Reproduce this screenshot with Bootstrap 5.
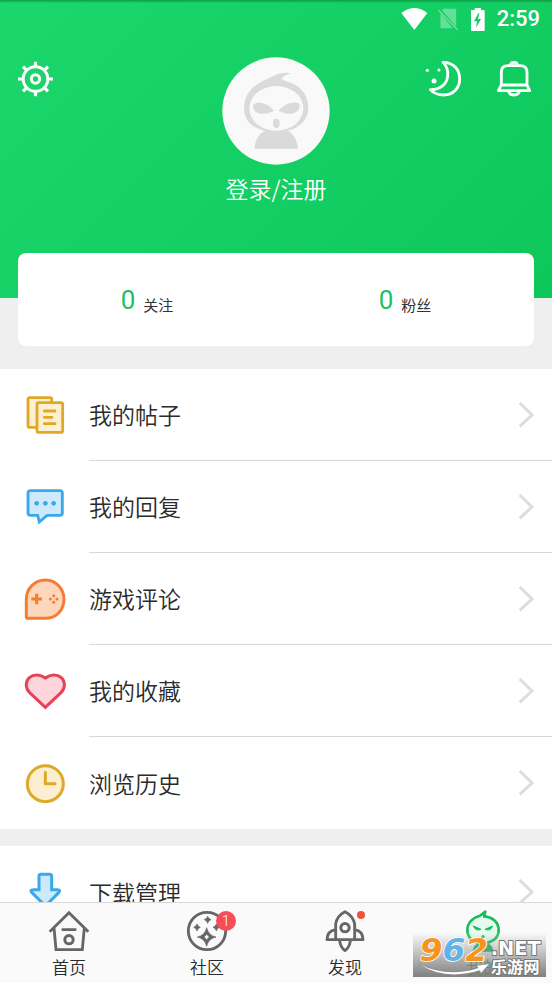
<!DOCTYPE html>
<html lang="zh-CN">
<head>
<meta charset="utf-8">
<meta name="viewport" content="width=device-width, initial-scale=1">
<title>个人中心</title>
<link href="https://cdn.jsdelivr.net/npm/bootstrap@5.3.0/dist/css/bootstrap.min.css" rel="stylesheet">
<style>
body{font-family:Roboto,"Noto Sans CJK SC",sans-serif;color:#2b2b2b;background:#efefef}
svg{display:block;overflow:visible;flex:none}
.scroll-area{scrollbar-width:none;min-height:0}
.scroll-area::-webkit-scrollbar{display:none}
.hero{background:linear-gradient(135deg,#1bd76c,#0dc75b);padding-bottom:93px}
.status-bar{height:38px;font-size:22px;line-height:38px;font-weight:500;padding-right:12px;background:linear-gradient(#0a9c46 0,#0a9c4600 3px)}
.hero-row{padding:19px 18px 0}
.hero-side{padding-top:4px}
.hero-tools{gap:35px;margin-right:3px}
.icon-btn{background:none;border:0;padding:0;color:#fff}
.login-link{font-family:"Noto Sans CJK SC",sans-serif;font-weight:350;font-size:23px;line-height:34px;margin-top:6px}
.stats{margin:-45px 18px 23px;height:93px;border-radius:8px}
.stat-link{color:#333;text-decoration:none}
.stat-num{font-size:26px;line-height:28px;color:#1fbf61}
.stat-name{font-size:15px;line-height:16px}
.menu-row{height:92px;color:#2b2b2b;text-decoration:none;font-family:"Noto Sans CJK SC",sans-serif;font-weight:350;font-size:23px}
.menu-icon{width:89px;padding-left:25px}
.menu-body{border-bottom:1px solid #d9d9d9;padding-right:18px}
.menu-row:last-child .menu-body{border-bottom:0}
.menu-gap{margin-bottom:17px}
.tabs{background:#fafafa;border-top:1px solid #d9d9d9;padding:8px 0 4px}
.tab-link{color:#2b2b2b;text-decoration:none;font-family:"Noto Sans CJK SC",sans-serif;font-weight:350;font-size:17px;line-height:24px}
.tab-link.current{color:#18bf5c}
.tab-count{left:29px;top:0;width:20px;height:20px;font-family:Roboto,sans-serif;font-size:14px;line-height:20px;background:#f64d57}
.tab-dot{left:32px;top:0;width:8px;height:8px;background:#f0523f}
.site-stamp{right:6px;bottom:6px;background:linear-gradient(#eeeeee22,#777e)}
</style>
</head>
<body>
<div class="vh-100 d-flex flex-column position-relative">
<main class="scroll-area flex-grow-1 overflow-auto">
  <header class="hero text-white">
    <div class="status-bar d-flex align-items-center justify-content-end">
      <svg width="27" height="22" viewBox="34 22 81 66" fill="#fff"><path d="M35 37Q74 7 113 37L74 88Z"/></svg>
      <svg class="ms-2" width="23" height="22" viewBox="138 22 68 66"><path d="M151 38V83H188L148 35ZM155 28 162 24H194Q198 24 198 28V78Z" fill="#fff" opacity=".35"/><path d="M145 29 202 87" stroke="#fff" stroke-width="4" opacity=".4"/></svg>
      <svg class="ms-2" width="22" height="23" viewBox="235 21 66 69"><path fill="#fff" fill-rule="evenodd" d="M258 21H277V27H285Q288 27 288 30V87Q288 90 285 90H250Q247 90 247 87V30Q247 27 250 27H258ZM269 37 256 61H265L262 80 277 54H268L272 37Z"/></svg>
      <span class="ms-2">2:59</span>
    </div>
    <div class="hero-row d-flex align-items-start">
      <div class="hero-side col">
        <button class="icon-btn" type="button" aria-label="设置">
          <svg width="35" height="36" viewBox="54 62 105 108" fill="none" stroke="#fff" stroke-width="9"><circle cx="106.500" cy="116" r="37"/><circle cx="106.500" cy="116" r="12.500"/><path stroke-width="9.500" d="M106.500 64V80M106.500 152V168M54 116H70M143 116H159M69 79 81 91M132 141 144 153M144 79 132 91M81 141 69 153"/></svg>
        </button>
      </div>
      <a href="#" class="text-white text-decoration-none d-flex flex-column align-items-center">
        <svg width="108" height="108" viewBox="36 19 324 324"><circle cx="198" cy="181" r="161" fill="#f9f9f9"/><path fill="#dadada" d="M133 294Q139 241 183 235H215Q258 241 264 294Z"/><path fill="#dadada" d="M102 174C102 125 135 99 174 84C196 73 218 62 243 68C228 73 219 78 214 85L228 92C269 101 295 132 295 171C295 214 257 244 198 244C139 244 102 216 102 174Z"/><ellipse cx="199" cy="173" rx="81" ry="67" fill="#f9f9f9"/><path fill="#dadada" d="M192 180C174 157 145 150 131 161C124 174 138 188 154 189C170 190 180 187 192 180ZM206 180C225 157 253 150 267 159C274 174 260 188 244 189C229 190 218 187 206 180Z"/><ellipse cx="199" cy="218" rx="10" ry="14" fill="#dadada"/></svg>
        <span class="login-link">登录/注册</span>
      </a>
      <div class="hero-side col">
        <div class="hero-tools d-flex justify-content-end me-n1">
        <button class="icon-btn" type="button" aria-label="夜间模式">
          <svg width="38" height="36" viewBox="102 183 114 108" fill="none" stroke="#fff" stroke-width="8.500" stroke-linejoin="round"><path d="M159 187C194 187 209 212 209 237C209 265 189 285 161 285C144 285 130 279 121 269C151 269 171 252 173 228C175 211 169 197 159 187Z"/><g fill="#fff" stroke="none"><circle cx="112" cy="211" r="5"/><circle cx="147" cy="210" r="4.500"/><circle cx="132" cy="243" r="7.500"/></g></svg>
        </button>
        <button class="icon-btn" type="button" aria-label="通知">
          <svg width="34" height="36" viewBox="320 183 102 108" fill="none" stroke="#fff" stroke-width="8.500" stroke-linejoin="round"><path d="M361 195Q361 187 371 187Q381 187 381 195M333 255V217Q333 197 353 197H389Q410 197 410 217V255L418 272H324L333 255H410M355 274Q357 285 371 285Q385 285 387 274"/></svg>
        </button>
        </div>
      </div>
    </div>
  </header>
  <section class="stats bg-white d-flex position-relative">
    <a href="#" class="stat-link col d-flex align-items-center justify-content-center"><span class="d-flex align-items-end gap-2"><span class="stat-num">0</span><span class="stat-name">关注</span></span></a>
    <a href="#" class="stat-link col d-flex align-items-center justify-content-center"><span class="d-flex align-items-end gap-2"><span class="stat-num">0</span><span class="stat-name">粉丝</span></span></a>
  </section>
  <nav class="menu-gap bg-white">
    <a href="#" class="menu-row d-flex align-items-center">
      <span class="menu-icon"><svg width="40" height="40" viewBox="75 43 120 120" fill="#fcf0d2" stroke="#dfa928" stroke-width="8.500" stroke-linecap="round"><rect x="84" y="51" width="71" height="89" rx="5"/><rect x="111" y="66" width="77" height="89" rx="5"/><path stroke-width="8.500" d="M133 91H165M133 110H156M133 129H165"/></svg></span>
      <span class="menu-body flex-grow-1 h-100 d-flex align-items-center justify-content-between">我的帖子<svg width="15" height="26" viewBox="117 65 45 78" fill="none" stroke="#ddd" stroke-width="9"><path d="M119 68 156 104 119 138"/></svg></span>
    </a>
    <a href="#" class="menu-row d-flex align-items-center">
      <span class="menu-icon"><svg width="40" height="40" viewBox="75 320 120 120"><path d="M92 331H179Q187 331 187 339V398Q187 405 179 405H141L118 425 113 405H92Q84 405 84 397V339Q84 331 92 331Z" fill="#cceafb" stroke="#39a9e8" stroke-width="8.500"/><g fill="#39a9e8"><circle cx="110" cy="369" r="7"/><circle cx="136" cy="369" r="7"/><circle cx="161" cy="369" r="7"/></g></svg></span>
      <span class="menu-body flex-grow-1 h-100 d-flex align-items-center justify-content-between">我的回复<svg width="15" height="26" viewBox="117 65 45 78" fill="none" stroke="#ddd" stroke-width="9"><path d="M119 68 156 104 119 138"/></svg></span>
    </a>
    <a href="#" class="menu-row d-flex align-items-center">
      <span class="menu-icon"><svg width="40" height="40" viewBox="75 55 120 120"><path d="M136 58C168 58 192 84 192 116C192 149 168 173 136 173H83Q79 173 79 169V116C79 84 104 58 136 58Z" fill="#fdd7bb" stroke="#f47d31" stroke-width="9"/><path d="M94 115H126M110 99V131" stroke="#f47d31" stroke-width="9"/><g fill="#f47d31"><circle cx="161" cy="105" r="4.500"/><circle cx="151" cy="115" r="4.500"/><circle cx="171" cy="115" r="4.500"/><circle cx="161" cy="125" r="4.500"/></g></svg></span>
      <span class="menu-body flex-grow-1 h-100 d-flex align-items-center justify-content-between">游戏评论<svg width="15" height="26" viewBox="117 65 45 78" fill="none" stroke="#ddd" stroke-width="9"><path d="M119 68 156 104 119 138"/></svg></span>
    </a>
    <a href="#" class="menu-row d-flex align-items-center">
      <span class="menu-icon"><svg width="40" height="40" viewBox="75 331 120 120"><path d="M136 440 89 396C75 382 76 362 88 351C101 340 121 340 136 352C151 340 171 340 184 351C196 362 197 382 183 396Z" fill="#ffd5dc" stroke="#e6435a" stroke-width="9"/></svg></span>
      <span class="menu-body flex-grow-1 h-100 d-flex align-items-center justify-content-between">我的收藏<svg width="15" height="26" viewBox="117 65 45 78" fill="none" stroke="#ddd" stroke-width="9"><path d="M119 68 156 104 119 138"/></svg></span>
    </a>
    <a href="#" class="menu-row d-flex align-items-center">
      <span class="menu-icon"><svg width="40" height="40" viewBox="75 52 120 120" stroke="#dfa928" stroke-width="9"><circle cx="136" cy="114" r="54" fill="#fcefd0"/><path d="M136 80V114H165" fill="none" stroke-linecap="round" stroke-linejoin="round"/></svg></span>
      <span class="menu-body flex-grow-1 h-100 d-flex align-items-center justify-content-between">浏览历史<svg width="15" height="26" viewBox="117 65 45 78" fill="none" stroke="#ddd" stroke-width="9"><path d="M119 68 156 104 119 138"/></svg></span>
    </a>
  </nav>
  <nav class="bg-white">
    <a href="#" class="menu-row d-flex align-items-center">
      <span class="menu-icon"><svg width="40" height="40" viewBox="75 381 120 120"><path d="M122 388H149Q155 388 155 394V434H172Q183 434 176 443L141 478Q136 482 131 478L96 443Q88 434 100 434H117V394Q117 388 122 388Z" fill="#cceafb" stroke="#39a9e8" stroke-width="9"/></svg></span>
      <span class="menu-body flex-grow-1 h-100 d-flex align-items-center justify-content-between">下载管理<svg width="15" height="26" viewBox="117 65 45 78" fill="none" stroke="#ddd" stroke-width="9"><path d="M119 68 156 104 119 138"/></svg></span>
    </a>
  </nav>
</main>
<nav class="tabs d-flex">
  <a href="#" class="tab-link col d-flex flex-column align-items-center gap-1"><svg width="40" height="40" viewBox="147 48 120 120" fill="none" stroke="#666" stroke-width="8.500"><path d="M149 110 207 53 265 110M162 98 168 164H247L253 98M185 104H229"/><circle cx="207" cy="134" r="12.500" stroke-width="9"/></svg>首页</a>
  <a href="#" class="tab-link col d-flex flex-column align-items-center gap-1"><span class="position-relative"><svg width="40" height="40" viewBox="561 48 120 120"><circle cx="621" cy="108" r="56" fill="none" stroke="#666" stroke-width="8.500"/><path fill="#666" fill-rule="evenodd" d="M620 98Q625 121 648 126Q625 131 620 154Q615 131 592 126Q615 121 620 98ZM620 118 612 126 620 134 628 126Z" stroke="#666" stroke-width="2"/><path fill="#666" stroke="#666" stroke-width="2" d="M623 64Q625 72 633 74Q625 76 623 85Q621 76 613 74Q621 72 623 64ZM591 87Q593 95 601 97Q593 99 591 108Q589 99 581 97Q589 95 591 87ZM649 87Q651 95 659 97Q651 99 649 108Q647 99 639 97Q647 95 649 87Z"/></svg><span class="tab-count position-absolute rounded-circle text-white text-center">1</span></span>社区</a>
  <a href="#" class="tab-link col d-flex flex-column align-items-center gap-1"><span class="position-relative"><svg width="40" height="40" viewBox="165 48 120 120" fill="none" stroke="#666" stroke-width="8.500" stroke-linejoin="round"><path d="M197 134V87Q201 62 225 50Q249 62 254 87V134ZM197 104Q171 108 171 134H197M254 104Q279 108 279 134H254M209 137Q211 157 225 167Q239 157 241 137"/><circle cx="225" cy="98" r="12.500" stroke-width="9"/></svg><span class="tab-dot position-absolute rounded-circle"></span></span>发现</a>
  <a href="#" class="tab-link current col d-flex flex-column align-items-center gap-1" aria-current="page"><svg width="40" height="40" viewBox="189 48 120 120"><path d="M217 170Q221 148 238 144H260Q277 148 281 170Z" fill="#18bf5c"/><path d="M249 64C279 64 296 84 296 105C296 130 276 144 249 144C221 144 202 130 202 105C202 84 219 67 239 63L256 50 252 63" fill="#e6faed" stroke="#18bf5c" stroke-width="8" stroke-linejoin="round"/><path d="M220 93 243 103Q227 110 220 93ZM278 93 255 103Q271 110 278 93Z" fill="#18bf5c" stroke="#18bf5c" stroke-width="3"/><circle cx="249" cy="125" r="5" fill="#18bf5c"/></svg>我的</a>
</nav>
<div class="site-stamp position-absolute">
  <svg width="133" height="44" viewBox="39 114 399 132" font-family="'DejaVu Sans',sans-serif" font-weight="700" paint-order="stroke" stroke="#fff" stroke-width="5" stroke-linejoin="round">
    <g font-style="italic" font-size="98"><text x="59" y="197" fill="#f7941e">9<tspan fill="#62b3e8">6</tspan><tspan>2</tspan></text></g>
    <path d="M58 207Q140 250 236 219L230 212 266 208 243 234 240 226Q135 258 58 207Z" fill="#fff" stroke="#888" stroke-width="2"/>
    <g fill="#fff" stroke="#777" stroke-width="6"><text x="272" y="180" font-size="58">.NET</text><text x="272" y="233" font-size="49" font-family="'Noto Sans CJK SC',sans-serif">乐游网</text></g>
  </svg>
</div>
</div>
<script src="https://cdn.jsdelivr.net/npm/bootstrap@5.3.0/dist/js/bootstrap.bundle.min.js"></script>
</body>
</html>
